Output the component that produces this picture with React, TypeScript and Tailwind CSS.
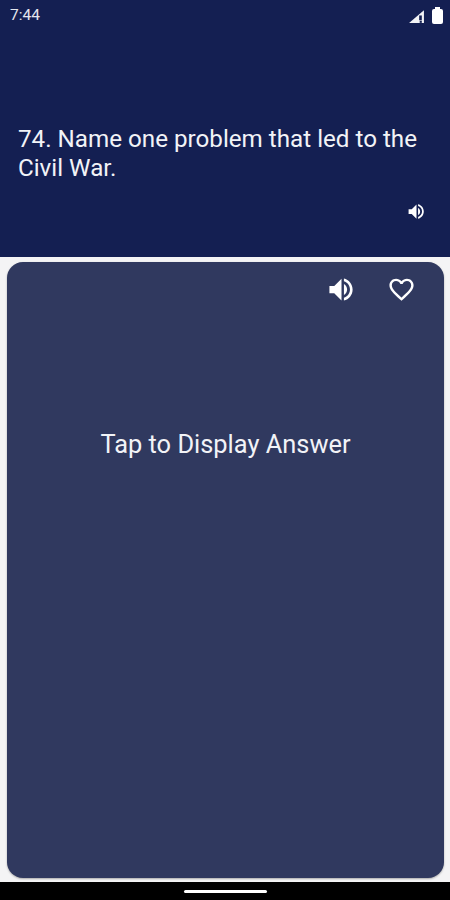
const font = { fontFamily: "Roboto, sans-serif" };

function SpeakerIcon({ className }: { className: string }) {
  return (
    <svg viewBox="0 0 24 24" fill="currentColor" className={className}>
      <path d="M2 9v6h4l6 6V3L6 9H2z" />
      <path d="M14 7.5v9c1.6-.8 2.6-2.5 2.6-4.5S15.6 8.3 14 7.5z" />
      <path d="M14 2.8v2.4c2.9.9 5 3.6 5 6.8s-2.1 5.9-5 6.8v2.4c4.1-.9 7.2-4.7 7.2-9.2S18.100 3.700 14 2.800z" />
    </svg>
  );
}

function HeartIcon() {
  return (
    <svg viewBox="0 0 24 24" fill="currentColor" className="h-[29px] w-[29px]">
      <path d="M16.5 3c-1.740 0-3.410.810-4.500 2.090C10.910 3.810 9.240 3 7.500 3 4.420 3 2 5.420 2 8.500c0 3.780 3.400 6.860 8.550 11.540L12 21.350l1.450-1.320C18.600 15.360 22 12.280 22 8.500 22 5.420 19.580 3 16.500 3zm-4.400 15.550l-.1.100-.1-.100C7.140 14.240 4 11.390 4 8.500 4 6.500 5.500 5 7.500 5c1.540 0 3.040.990 3.570 2.360h1.870C13.460 5.990 14.960 5 16.500 5c2 0 3.500 1.500 3.500 3.500 0 2.890-3.140 5.740-7.900 10.050z" />
    </svg>
  );
}

export default function App() {
  return (
    <div style={font} className="flex h-[900px] w-[450px] flex-col overflow-hidden bg-[#f4f4f5] text-white">
      <header className="h-[257px] bg-[#141f52]">
        <div className="flex h-8 items-center justify-between pl-[10px] pr-[7px]">
          <span className="text-[15.500px] leading-none text-[#e4e6ee]">7:44</span>
          <div className="flex items-center gap-[7px]">
            <svg viewBox="0 0 16 14" className="h-[15px] w-[17px]" fill="currentColor">
              <path d="M15 1v12H1z" opacity="0.95" />
              <path d="M10.500 6h2.500v4.500h-2.500z" fill="#141f52" />
              <path d="M11 11h2v2h-2z" fill="#141f52" />
            </svg>
            <div className="relative h-[15px] w-[11px] rounded-[2px] bg-white">
              <div className="absolute left-[3px] top-[-2px] h-[2px] w-[5px] bg-white" />
            </div>
          </div>
        </div>
        <h1 className="mt-[93px] px-[18px] text-[24.200px] leading-[29px] font-normal text-[#f2f3f7]">
          74. Name one problem that led to the Civil War.
        </h1>
        <div className="mt-[19px] flex justify-end pr-[24px]">
          <SpeakerIcon className="h-[19px] w-[19px]" />
        </div>
      </header>
      <main className="ml-[7px] mr-[6px] mt-[5px] h-[616px] rounded-[16px] bg-[#30395f] shadow-[0_1px_2px_rgba(0,0,0,0.3)]">
        <div className="flex justify-end gap-[31px] pr-[28px] pt-[13px]">
          <SpeakerIcon className="h-[29px] w-[29px]" />
          <HeartIcon />
        </div>
        <p className="mt-[124px] text-center text-[25.400px] leading-[32px] text-[#f2f3f7]">Tap to Display Answer</p>
      </main>
      <div className="mt-[4px] flex h-[18px] flex-1 items-start justify-center bg-black pt-[8px]">
        <div className="h-[3px] w-[83px] rounded-full bg-white" />
      </div>
    </div>
  );
}
